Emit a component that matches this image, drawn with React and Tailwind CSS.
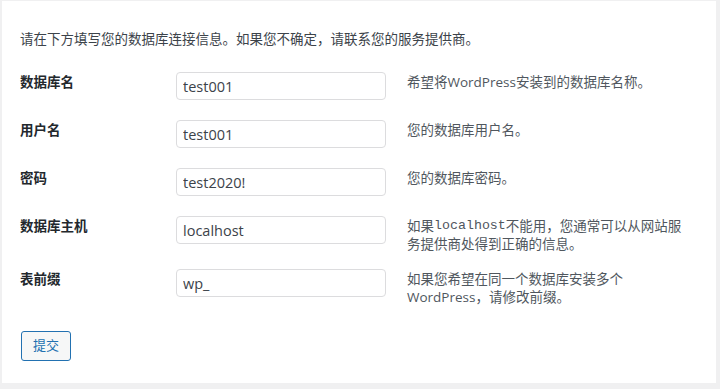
const fields = [
  { label: '数据库名', value: 'test001', desc: <>希望将WordPress安装到的数据库名称。</> },
  { label: '用户名', value: 'test001', desc: <>您的数据库用户名。</> },
  { label: '密码', value: 'test2020!', desc: <>您的数据库密码。</> },
  {
    label: '数据库主机',
    value: 'localhost',
    desc: (
      <>
        如果<code className="inline-block align-top font-['Liberation_Mono',monospace] text-[13.3px] leading-[18px]">localhost</code>
        不能用，您通常可以从网站服务提供商处得到正确的信息。
      </>
    ),
  },
  { label: '表前缀', value: 'wp_', desc: <>如果您希望在同一个数据库安装多个WordPress，请修改前缀。</> },
]

const FieldRow = ({ field }) => (
  <div className="flex items-start min-h-[48px] pb-[16px]">
    <div className="w-[156px] shrink-0 leading-[20px] font-bold text-[13.5px] text-[#23282d]">
      {field.label}
    </div>
    <input
      readOnly
      value={field.value}
      className="w-[210px] h-[28px] shrink-0 border border-[#dcdcde] rounded-[4px] px-[6px] text-[14.5px] text-[#3c434a] bg-white outline-none"
    />
    <p className="w-[280px] ml-[21px] mt-[1px] leading-[18px] text-[13.5px] text-[#50575e]">
      {field.desc}
    </p>
  </div>
)

export default function App() {
  return (
    <div className="w-[720px] h-[389px] bg-[#f0f0f1] pl-[2px] pr-[4px] pt-[1px] pb-[6px] font-['Open_Sans','Noto_Sans_CJK_SC',sans-serif]">
      <div className="h-full bg-white pl-[18px] pt-[28px]">
        <p className="leading-[20px] text-[13.5px] text-[#3c434a]">
          请在下方填写您的数据库连接信息。如果您不确定，请联系您的服务提供商。
        </p>
        <div className="mt-[23px]">
          {fields.map(field => (
            <FieldRow key={field.label} field={field} />
          ))}
        </div>
        <button className="block mt-[9px] ml-[1px] w-[50px] h-[30px] border border-[#2271b1] rounded-[3px] bg-[#f6f7f7] text-[13px] text-[#2271b1]">
          提交
        </button>
      </div>
    </div>
  )
}
